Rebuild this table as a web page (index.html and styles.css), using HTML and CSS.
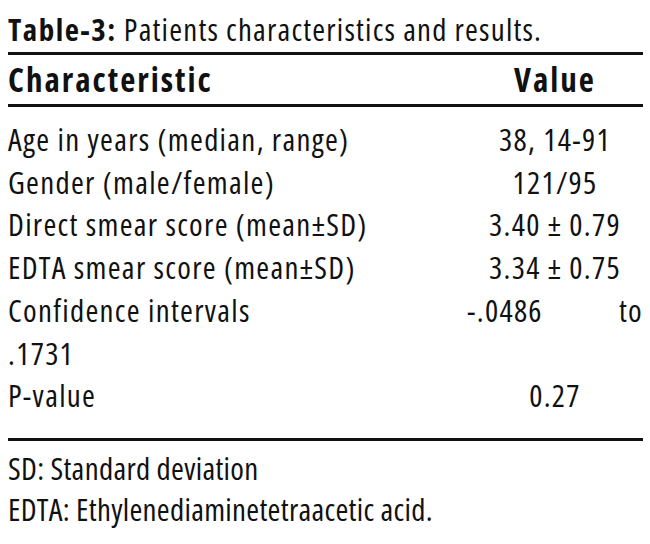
FILE: index.html
```html
<!DOCTYPE html>
<html lang="en">
<head>
<meta charset="utf-8">
<title>Table-3</title>
<link rel="stylesheet" href="styles.css">
</head>
<body>
<div class="page">
  <p class="caption"><b class="label">Table-3:</b> Patients characteristics and results.</p>
  <table class="data">
    <thead>
      <tr><th class="col-char">Characteristic</th><th class="col-val">Value</th></tr>
    </thead>
    <tbody>
      <tr class="first"><td>Age in years (median, range)</td><td class="val">38, 14-91</td></tr>
      <tr><td>Gender (male/female)</td><td class="val">121/95</td></tr>
      <tr><td>Direct smear score (mean±SD)</td><td class="val">3.40 ± 0.79</td></tr>
      <tr><td>EDTA smear score (mean±SD)</td><td class="val">3.34 ± 0.75</td></tr>
      <tr><td>Confidence intervals</td><td class="val split"><span>-.0486</span><span>to</span></td></tr>
      <tr><td>.1731</td><td class="val"></td></tr>
      <tr class="last"><td>P-value</td><td class="val">0.27</td></tr>
    </tbody>
  </table>
  <p class="note note-first">SD: Standard deviation</p>
  <p class="note">EDTA: Ethylenediaminetetraacetic acid.</p>
</div>
</body>
</html>
```
FILE: styles.css
```css
html, body {
  margin: 0;
  padding: 0;
  background: #ffffff;
}
.page {
  padding: 10px 7px 0 8px;
  font-family: "Open Sans", "Liberation Sans", sans-serif;
  font-stretch: 75%;
  color: #111111;
}
.caption {
  margin: 0;
  font-size: 31px;
  line-height: 38px;
  letter-spacing: 1.2px;
}
.label {
  font-weight: 700;
  letter-spacing: 1.5px;
}
.data {
  width: 100%;
  border-collapse: collapse;
  margin-top: 4px;
  font-size: 31px;
  letter-spacing: 1.3px;
}
.data thead th {
  border-top: 3px solid #111111;
  border-bottom: 3px solid #111111;
  font-size: 33px;
  font-weight: 700;
  letter-spacing: 2px;
  height: 49px;
  padding: 0;
  vertical-align: middle;
}
.col-char {
  text-align: left;
}
.col-val {
  text-align: center;
  width: 176px;
}
.data td {
  padding: 0;
  height: 42.7px;
  line-height: 42.7px;
}
.data tr.first td {
  padding-top: 11px;
}
.data tr.last td {
  padding-bottom: 21px;
  border-bottom: 3px solid #111111;
}
.val {
  text-align: center;
}
.split {
  display: flex;
  justify-content: space-between;
}
.note {
  margin: 0;
  font-size: 31px;
  line-height: 41px;
  letter-spacing: 0.3px;
}
.note-first {
  margin-top: 7px;
}
```
